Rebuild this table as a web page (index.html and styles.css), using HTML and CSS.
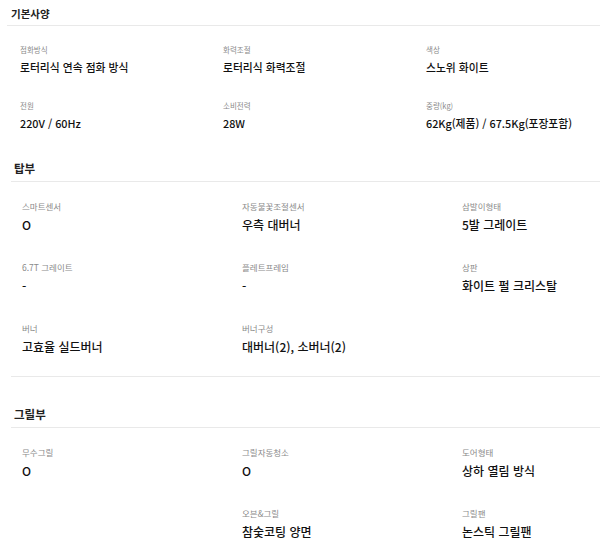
FILE: index.html
```html
<!DOCTYPE html>
<html lang="ko">
<head>
<meta charset="utf-8">
<title>제품 사양</title>
<link rel="stylesheet" href="styles.css">
</head>
<body>
<div class="page">
  <section class="spec spec--compact">
    <h2 class="spec-title">기본사양</h2>
    <div class="spec-grid">
      <div class="spec-item"><div class="spec-label">점화방식</div><div class="spec-value">로터리식 연속 점화 방식</div></div>
      <div class="spec-item"><div class="spec-label">화력조절</div><div class="spec-value">로터리식 화력조절</div></div>
      <div class="spec-item"><div class="spec-label">색상</div><div class="spec-value">스노위 화이트</div></div>
      <div class="spec-item"><div class="spec-label">전원</div><div class="spec-value">220V / 60Hz</div></div>
      <div class="spec-item"><div class="spec-label">소비전력</div><div class="spec-value">28W</div></div>
      <div class="spec-item"><div class="spec-label">중량(kg)</div><div class="spec-value">62Kg(제품) / 67.5Kg(포장포함)</div></div>
    </div>
  </section>

  <section class="spec spec--divided">
    <h2 class="spec-title">탑부</h2>
    <div class="spec-grid">
      <div class="spec-item"><div class="spec-label">스마트센서</div><div class="spec-value">O</div></div>
      <div class="spec-item"><div class="spec-label">자동불꽃조절센서</div><div class="spec-value">우측 대버너</div></div>
      <div class="spec-item"><div class="spec-label">삼발이형태</div><div class="spec-value">5발 그레이트</div></div>
      <div class="spec-item"><div class="spec-label">6.7T 그레이트</div><div class="spec-value">-</div></div>
      <div class="spec-item"><div class="spec-label">플레트프레임</div><div class="spec-value">-</div></div>
      <div class="spec-item"><div class="spec-label">상판</div><div class="spec-value">화이트 펄 크리스탈</div></div>
      <div class="spec-item"><div class="spec-label">버너</div><div class="spec-value">고효율 실드버너</div></div>
      <div class="spec-item"><div class="spec-label">버너구성</div><div class="spec-value">대버너(2), 소버너(2)</div></div>
    </div>
  </section>

  <section class="spec">
    <h2 class="spec-title">그릴부</h2>
    <div class="spec-grid">
      <div class="spec-item"><div class="spec-label">무수그릴</div><div class="spec-value">O</div></div>
      <div class="spec-item"><div class="spec-label">그릴자동청소</div><div class="spec-value">O</div></div>
      <div class="spec-item"><div class="spec-label">도어형태</div><div class="spec-value">상하 열림 방식</div></div>
      <div class="spec-item spec-item--empty"></div>
      <div class="spec-item"><div class="spec-label">오븐&amp;그릴</div><div class="spec-value">참숯코팅 양면</div></div>
      <div class="spec-item"><div class="spec-label">그릴팬</div><div class="spec-value">논스틱 그릴팬</div></div>
    </div>
  </section>
</div>
</body>
</html>
```

FILE: styles.css
```css
html, body {
  margin: 0;
  padding: 0;
  background: #ffffff;
}

body {
  font-family: "Noto Sans CJK KR", "Noto Sans", sans-serif;
  color: #111111;
  overflow: hidden;
  width: 600px;
  height: 554px;
}

.page {
  display: flex;
  flex-direction: column;
}

.spec {
  margin-left: 11px;
  margin-top: 29px;
}

.spec-title {
  margin: 0;
  padding: 0 0 5px 3px;
  font-size: 11.5px;
  line-height: 16px;
  font-weight: 700;
  color: #222222;
  border-bottom: 1px solid #e9e9e9;
}

.spec-grid {
  display: grid;
  grid-template-columns: 220px 220px minmax(0, 1fr);
  row-gap: 27px;
  padding: 18px 0 0 11px;
}

.spec--divided .spec-grid {
  padding-bottom: 20px;
  border-bottom: 1px solid #e9e9e9;
}

.spec-item {
  display: flex;
  flex-direction: column;
  min-width: 0;
}

.spec-label {
  font-size: 8.5px;
  line-height: 12px;
  color: #8a8a8a;
  white-space: nowrap;
}

.spec-value {
  margin-top: 4px;
  font-size: 12px;
  line-height: 18px;
  font-weight: 500;
  color: #111111;
  white-space: nowrap;
}

/* first block is rendered at a slightly smaller scale */
.spec--compact {
  margin-left: 7px;
  margin-top: 7px;
}

.spec--compact .spec-title {
  padding: 0 0 4px 4px;
  font-size: 10.5px;
  line-height: 14px;
}

.spec--compact .spec-grid {
  grid-template-columns: 203px 203px minmax(0, 1fr);
  row-gap: 25px;
  padding: 19px 0 0 13px;
}

.spec--compact .spec-label {
  font-size: 7.5px;
  line-height: 10px;
}

.spec--compact .spec-value {
  font-size: 10.8px;
  line-height: 17px;
}

.spec--compact + .spec {
  margin-top: 28px;
}
```
